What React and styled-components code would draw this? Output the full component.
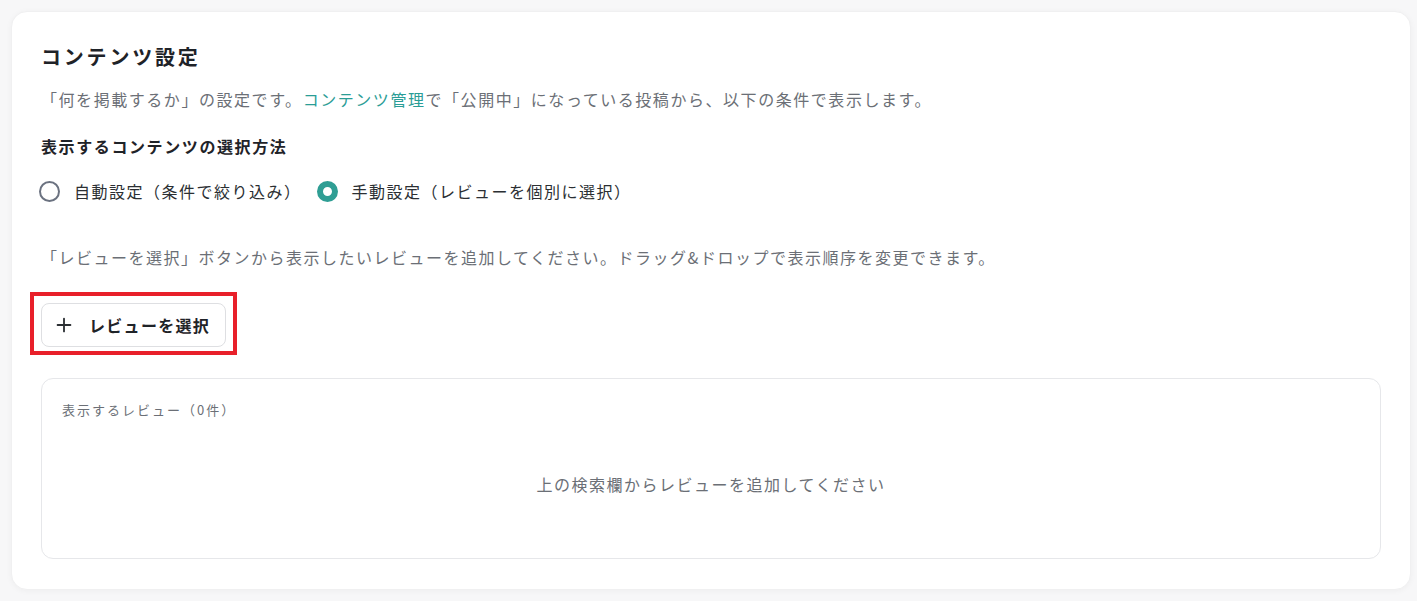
import React, { useState } from 'react'
import styled, { createGlobalStyle } from 'styled-components'
import { Plus } from 'lucide-react'

const GlobalStyle = createGlobalStyle`
  html, body {
    margin: 0;
    padding: 0;
    background: #f7f7f8;
  }
  body {
    font-family: "Noto Sans CJK JP", "Noto Sans", sans-serif;
    color: #1f2328;
  }
`

const Page = styled.div`
  padding: 11px;
`

const Card = styled.section`
  width: 1400px;
  box-sizing: border-box;
  background: #fff;
  border-radius: 16px;
  border: 1px solid #f0f0f1;
  box-shadow: 0 1px 6px rgba(0, 0, 0, 0.04);
  padding: 30px 29px 30px 29px;
`

const Title = styled.h2`
  margin: 0;
  font-size: 20px;
  line-height: 30px;
  font-weight: 700;
  letter-spacing: 2.8px;
  color: #1f2328;
`

const Lead = styled.p`
  margin: 15px 0 0;
  font-size: 16px;
  line-height: 24px;
  letter-spacing: 1.55px;
  color: #6b6f76;
`

const Link = styled.a`
  color: #2a9d96;
  text-decoration: none;
`

const SubHeading = styled.h3`
  margin: 23px 0 0;
  font-size: 16px;
  line-height: 24px;
  font-weight: 700;
  letter-spacing: 1.6px;
  color: #1f2328;
`

const RadioGroup = styled.div`
  display: flex;
  align-items: center;
  gap: 15px;
  margin: 21px 0 0 -2px;
`

const RadioLabel = styled.label`
  display: flex;
  align-items: center;
  gap: 14px;
  font-size: 16px;
  line-height: 24px;
  letter-spacing: 1.5px;
  color: #2b2f33;
  cursor: pointer;
`

const RadioDot = styled.span`
  width: 21px;
  height: 21px;
  box-sizing: border-box;
  border-radius: 50%;
  background: #fff;
  border: ${p => (p.$checked ? '6.5px solid #2f9e94' : '2px solid #6b7280')};
`

const Hint = styled.p`
  margin: 42px 0 0;
  font-size: 16px;
  line-height: 24px;
  letter-spacing: 1.5px;
  color: #6b6f76;
`

const Highlight = styled.div`
  display: inline-flex;
  margin: 23px 0 0 -11px;
  padding: 7px 7px 4px 7px;
  border: 4px solid #e8202a;
`

const SelectButton = styled.button`
  display: flex;
  align-items: center;
  gap: 14px;
  height: 44px;
  padding: 0 15px 0 11px;
  background: #fff;
  border: 1px solid #dedfe2;
  border-radius: 8px;
  font-family: inherit;
  font-size: 16px;
  font-weight: 700;
  letter-spacing: 1.3px;
  color: #1f2328;
  cursor: pointer;
`

const ListBox = styled.div`
  margin-top: 23px;
  height: 181px;
  box-sizing: border-box;
  border: 1px solid #e6e7ea;
  border-radius: 12px;
  padding: 21px 20px 0;
`

const ListLabel = styled.div`
  font-size: 13px;
  line-height: 20px;
  letter-spacing: 2px;
  color: #6b6f76;
`

const Empty = styled.div`
  margin-top: 52px;
  text-align: center;
  font-size: 16px;
  line-height: 24px;
  letter-spacing: 1.5px;
  color: #6b6f76;
`

export default function App () {
  const [mode, setMode] = useState('manual')
  const reviews = []

  return (
    <Page>
      <GlobalStyle />
      <Card>
        <Title>コンテンツ設定</Title>
        <Lead>
          「何を掲載するか」の設定です。<Link href="#">コンテンツ管理</Link>で「公開中」になっている投稿から、以下の条件で表示します。
        </Lead>
        <SubHeading>表示するコンテンツの選択方法</SubHeading>
        <RadioGroup>
          <RadioLabel onClick={() => setMode('auto')}>
            <RadioDot $checked={mode === 'auto'} />
            自動設定（条件で絞り込み）
          </RadioLabel>
          <RadioLabel onClick={() => setMode('manual')}>
            <RadioDot $checked={mode === 'manual'} />
            手動設定（レビューを個別に選択）
          </RadioLabel>
        </RadioGroup>
        <Hint>「レビューを選択」ボタンから表示したいレビューを追加してください。ドラッグ&amp;ドロップで表示順序を変更できます。</Hint>
        <Highlight>
          <SelectButton type="button">
            <Plus size={22} strokeWidth={2} color="#2b2f33" />
            レビューを選択
          </SelectButton>
        </Highlight>
        <ListBox>
          <ListLabel>表示するレビュー（{reviews.length}件）</ListLabel>
          <Empty>上の検索欄からレビューを追加してください</Empty>
        </ListBox>
      </Card>
    </Page>
  )
}
